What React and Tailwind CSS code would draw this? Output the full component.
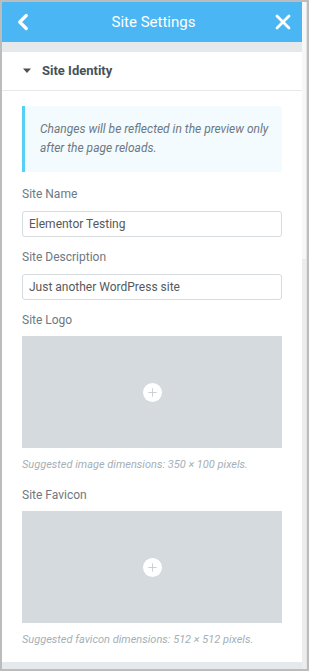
import { ChevronLeft, X, Plus } from 'lucide-react'

const font = { fontFamily: 'Roboto, "Liberation Sans", sans-serif' }

function Field({ label, value }) {
  return (
    <div className="mb-[12px]">
      <div className="text-[12px] text-[#6d7882] leading-[16px] mb-[9px]">{label}</div>
      <div className="h-[26px] border border-[#d5dadf] rounded-[3px] px-[6px] flex items-center text-[12px] text-[#55595c]">
        {value}
      </div>
    </div>
  )
}

function MediaBox({ label, hint, last }) {
  return (
    <div className={last ? '' : 'mb-[15px]'}>
      <div className="text-[12px] text-[#6d7882] leading-[16px] mb-[8px]">{label}</div>
      <div className="h-[112px] bg-[#d5dadf] flex items-center justify-center">
        <div className="w-[19px] h-[19px] rounded-full bg-white flex items-center justify-center">
          <Plus size={13} strokeWidth={1.6} color="#c2cbd2" />
        </div>
      </div>
      <div className="mt-[10px] text-[11px] italic text-[#a4afb7] leading-[14px]">{hint}</div>
    </div>
  )
}

export default function App() {
  return (
    <div className="w-[309px] h-[671px] bg-[#bcbcbc] p-[2px] overflow-hidden" style={font}>
      <div className="flex h-full">
        {/* Main column */}
        <div className="w-[300px] flex flex-col bg-[#e6e9ec]">
          {/* Header */}
          <div className="h-[40px] bg-[#4ab7f4] flex items-center justify-between pl-[8px] pr-[7px] shrink-0">
            <ChevronLeft size={26} strokeWidth={3} color="#fff" />
            <div className="text-[15px] text-white">Site Settings</div>
            <X size={24} strokeWidth={2.8} color="#fff" />
          </div>

          <div className="h-[10px] shrink-0" />

          {/* Panel */}
          <div className="bg-white h-[610px] shrink-0">
            <div className="h-[39px] flex items-center px-[20px] border-b border-[#e6e9ec]">
              <svg width="10" height="6" viewBox="0 0 10 6" className="mr-[10px]">
                <path d="M1 0.5 L9 0.5 L5 5 Z" fill="#495157" />
              </svg>
              <span className="text-[13px] font-bold text-[#495157]">Site Identity</span>
            </div>

            <div className="px-[20px] pt-[15px]">
              <div className="border-l-[3px] border-[#58d0f5] bg-[#f3fbff] rounded-r-[3px] pl-[15px] pr-[8px] py-[14px] mb-[14px]">
                <p className="text-[12px] italic text-[#6d7882] leading-[19px]">
                  Changes will be reflected in the preview only after the page reloads.
                </p>
              </div>

              <Field label="Site Name" value="Elementor Testing" />
              <Field label="Site Description" value="Just another WordPress site" />
              <MediaBox label="Site Logo" hint="Suggested image dimensions: 350 × 100 pixels." />
              <MediaBox label="Site Favicon" hint="Suggested favicon dimensions: 512 × 512 pixels." last />
            </div>
          </div>
        </div>

        {/* Scrollbar track */}
        <div className="flex-1 bg-[#f7f7f7] border-r border-[#e4e4e4] flex flex-col">
          <div className="h-[257px]" />
          <div className="flex-1 bg-[#ececec]" />
        </div>
      </div>
    </div>
  )
}
